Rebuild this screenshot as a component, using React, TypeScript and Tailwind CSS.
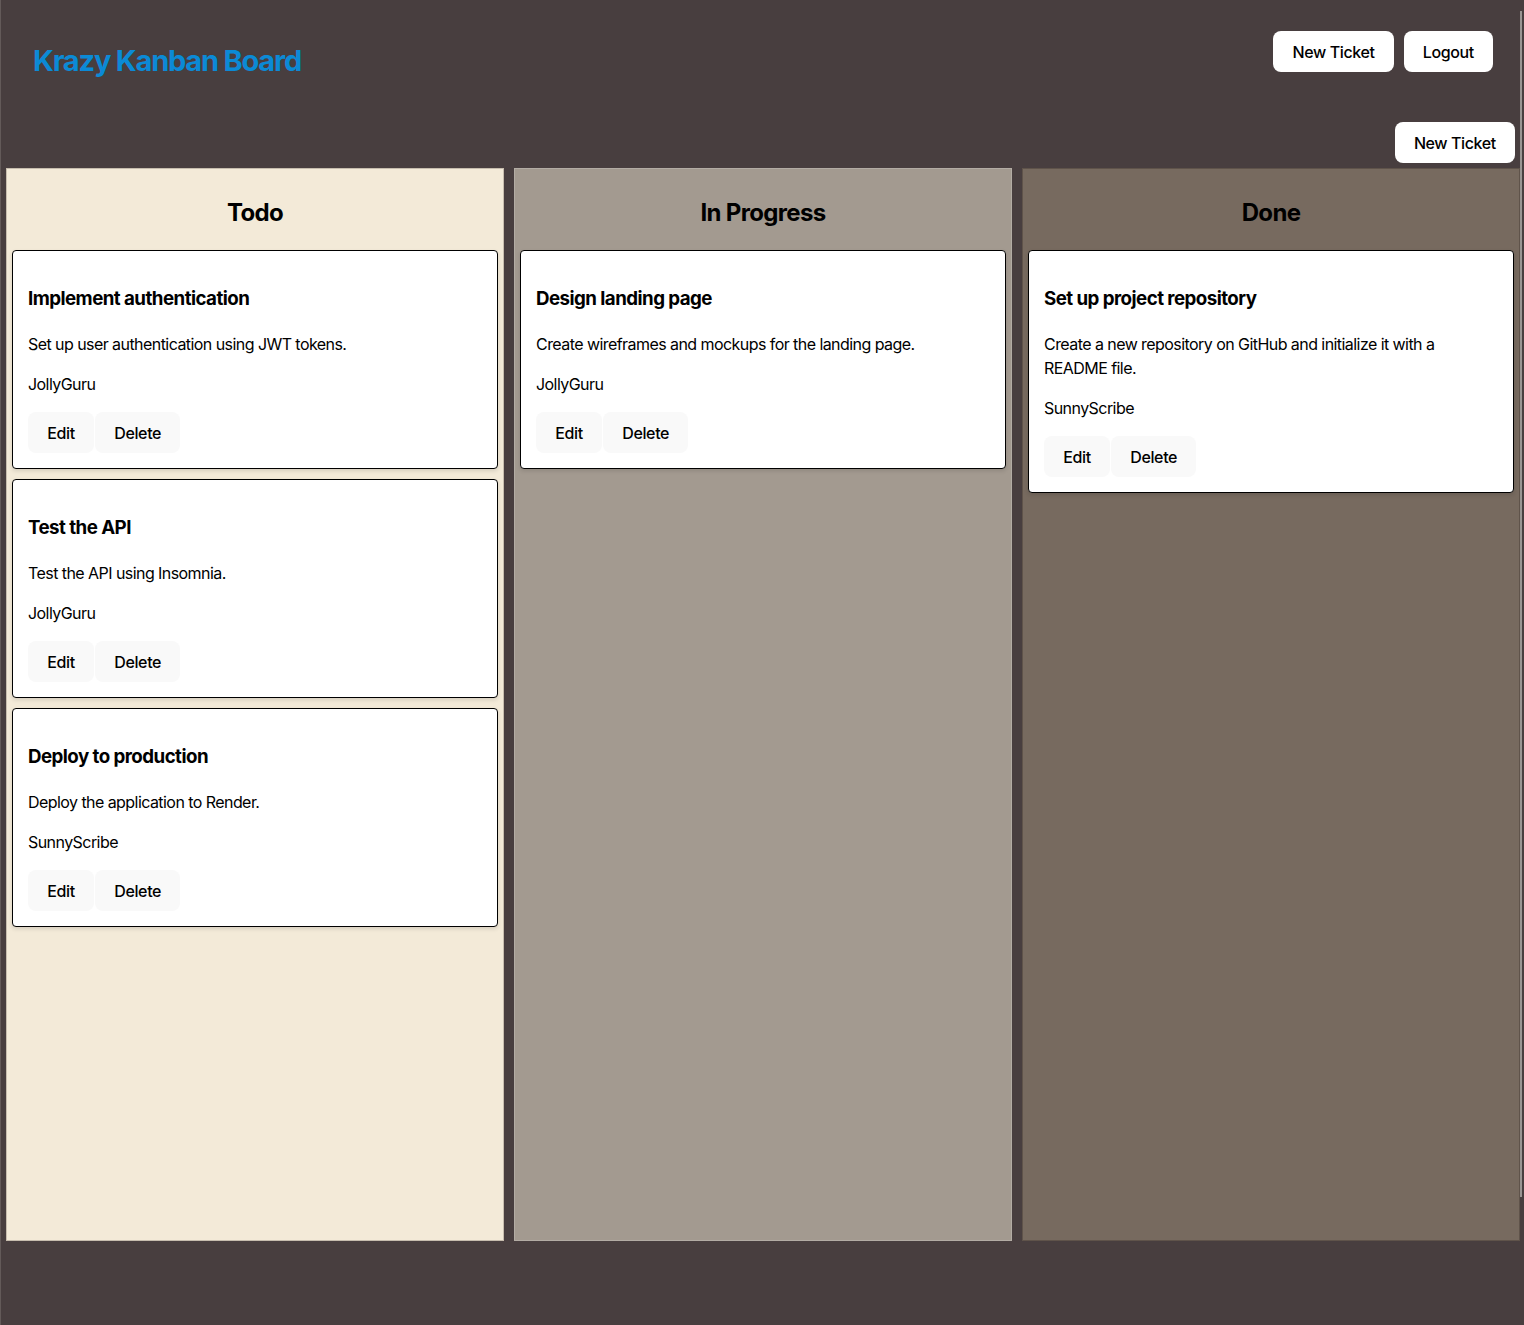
type Ticket = {
  id: number
  name: string
  description: string
  user: string
}

type Column = {
  title: string
  tickets: Ticket[]
  bg: string
}

const columns: Column[] = [
  {
    title: 'Todo',
    bg: 'bg-[#f3ead8] border-[#c7bdae]',
    tickets: [
      { id: 1, name: 'Implement authentication', description: 'Set up user authentication using JWT tokens.', user: 'JollyGuru' },
      { id: 2, name: 'Test the API', description: 'Test the API using Insomnia.', user: 'JollyGuru' },
      { id: 3, name: 'Deploy to production', description: 'Deploy the application to Render.', user: 'SunnyScribe' },
    ],
  },
  {
    title: 'In Progress',
    bg: 'bg-[#a39a90] border-[#b3aca4]',
    tickets: [
      { id: 4, name: 'Design landing page', description: 'Create wireframes and mockups for the landing page.', user: 'JollyGuru' },
    ],
  },
  {
    title: 'Done',
    bg: 'bg-[#776a5f] border-[#5f534a]',
    tickets: [
      {
        id: 5,
        name: 'Set up project repository',
        description: 'Create a new repository on GitHub and initialize it with a README file.',
        user: 'SunnyScribe',
      },
    ],
  },
]

function TicketCard({ ticket }: { ticket: Ticket }) {
  return (
    <div className="bg-white border border-black rounded-[4px] px-[15px] pt-[15px] pb-[15px] shadow-[0_2px_4px_rgba(0,0,0,0.12)]">
      <h3 className="text-[18.72px] leading-[28px] font-bold tracking-[-0.54px] mt-[18.72px] mb-[19.72px]">{ticket.name}</h3>
      <p className="text-base leading-6 tracking-[-0.56px] mb-4">{ticket.description}</p>
      <p className="text-base leading-6 tracking-[-0.56px] mb-4">{ticket.user}</p>
      <div className="flex gap-[1px]">
        <button className="h-[41px] px-[19.2px] rounded-[8px] bg-[#f9f9f9] text-base font-medium tracking-[-0.35px]">Edit</button>
        <button className="h-[41px] px-[19.2px] rounded-[8px] bg-[#f9f9f9] text-base font-medium tracking-[-0.35px]">Delete</button>
      </div>
    </div>
  )
}

export default function App() {
  return (
    <div className="relative min-h-screen bg-[#483e3f] border-l border-[#635a59] text-black font-['Inter',sans-serif] leading-normal">
      {/* overlay scrollbar thumb */}
      <div className="absolute right-[2px] top-[11px] w-[2px] h-[1186px] bg-[#9a9593]"></div>

      <header className="h-[122px] flex justify-between items-start pl-[32px] pr-[31px]">
        <h1 className="mt-[39px] text-[29px] leading-[44px] font-bold text-[#0b8ad6] tracking-[-1.2px]">Krazy Kanban Board</h1>
        <div className="mt-[31px] flex gap-[10px]">
          <button className="h-[41px] px-[19.2px] rounded-[8px] bg-white text-base font-medium tracking-[-0.4px]">New Ticket</button>
          <button className="h-[41px] px-[19.2px] rounded-[8px] bg-white text-base font-medium tracking-[-0.4px]">Logout</button>
        </div>
      </header>

      <div className="h-[46px] flex justify-end pr-[9px]">
        <button className="h-[41px] px-[19.2px] rounded-[8px] bg-white text-base font-medium tracking-[-0.4px]">New Ticket</button>
      </div>

      <main className="flex gap-[10px] pl-[5px]">
        {columns.map((col) => (
          <section key={col.title} className={`w-[498px] h-[1073px] border px-[5px] ${col.bg}`}>
            <h2 className="text-2xl leading-9 font-bold text-center tracking-[-0.65px] mt-[25.92px] mb-[18.92px]">{col.title}</h2>
            <div className="flex flex-col gap-[9.6px]">
              {col.tickets.map((t) => (
                <TicketCard key={t.id} ticket={t} />
              ))}
            </div>
          </section>
        ))}
      </main>
    </div>
  )
}
